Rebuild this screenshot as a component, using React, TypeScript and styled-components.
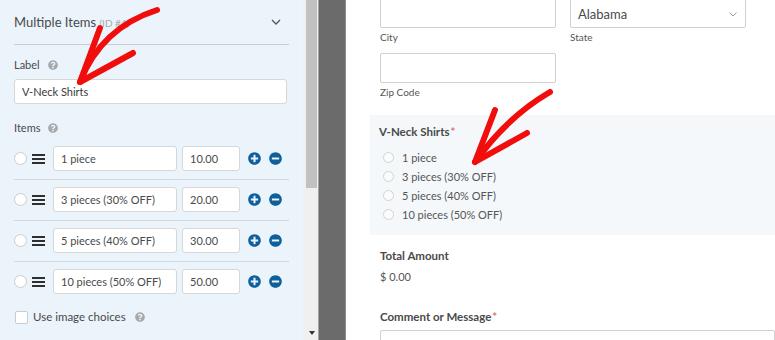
import React from "react";
import styled, { createGlobalStyle } from "styled-components";
import { FaPlusCircle, FaMinusCircle, FaQuestionCircle } from "react-icons/fa";

const GlobalStyle = createGlobalStyle`
  html, body {
    margin: 0;
    padding: 0;
    background: #ffffff;
  }
  * {
    box-sizing: border-box;
  }
`;

const FONT = `Lato, "Noto Sans", sans-serif`;

const items = [
  { label: "1 piece", price: "10.00" },
  { label: "3 pieces (30% OFF)", price: "20.00" },
  { label: "5 pieces (40% OFF)", price: "30.00" },
  { label: "10 pieces (50% OFF)", price: "50.00" },
];

const Help: React.FC = () => (
  <HelpIcon>
    <FaQuestionCircle />
  </HelpIcon>
);

const App: React.FC = () => {
  return (
    <>
      <GlobalStyle />
      <Page>
        <Options>
          <Header>
            <HeaderTitle>
              Multiple Items <small>(ID #4)</small>
            </HeaderTitle>
            <svg width="10" height="7" viewBox="0 0 10 7">
              <polyline points="1,1 5,5 9,1" fill="none" stroke="#555" strokeWidth="1.3" />
            </svg>
          </Header>

          <OptLabel style={{ marginTop: 12 }}>
            Label <Help />
          </OptLabel>
          <TextBox>V-Neck Shirts</TextBox>

          <OptLabel style={{ marginTop: 16 }}>
            Items <Help />
          </OptLabel>
          <ItemList>
            {items.map((it) => (
              <ItemRow key={it.label}>
                <Dot />
                <Handle>
                  <span />
                  <span />
                  <span />
                </Handle>
                <ItemInput $w={124}>{it.label}</ItemInput>
                <ItemInput $w={58}>{it.price}</ItemInput>
                <RoundBtn>
                  <FaPlusCircle />
                </RoundBtn>
                <RoundBtn>
                  <FaMinusCircle />
                </RoundBtn>
              </ItemRow>
            ))}
          </ItemList>

          <CheckRow>
            <Check />
            Use image choices <Help />
          </CheckRow>
        </Options>

        <ScrollTrack>
          <Thumb />
          <DownArrow />
        </ScrollTrack>

        <Divider />

        <Preview>
          <Fields>
            <FieldRow>
              <Field>
                <Input />
                <SubLabel>City</SubLabel>
              </Field>
              <Field>
                <Select>
                  Alabama
                  <svg width="8" height="5" viewBox="0 0 8 5">
                    <polyline points="0.5,0.5 4,4 7.5,0.5" fill="none" stroke="#999" strokeWidth="1" />
                  </svg>
                </Select>
                <SubLabel>State</SubLabel>
              </Field>
            </FieldRow>
            <Field style={{ marginTop: 9 }}>
              <Input />
              <SubLabel>Zip Code</SubLabel>
            </Field>
          </Fields>

          <ChoiceBox>
            <FieldTitle>
              V-Neck Shirts<Req>*</Req>
            </FieldTitle>
            <ChoiceList>
              {items.map((it) => (
                <Choice key={it.label}>
                  <ChoiceDot />
                  {it.label}
                </Choice>
              ))}
            </ChoiceList>
          </ChoiceBox>

          <Fields>
            <FieldTitle style={{ marginTop: 13 }}>Total Amount</FieldTitle>
            <Amount>$ 0.00</Amount>
            <FieldTitle style={{ marginTop: 24 }}>
              Comment or Message<Req>*</Req>
            </FieldTitle>
            <TextArea />
          </Fields>
        </Preview>

        <Arrows width="775" height="340" viewBox="0 0 775 340">
          <g fill="none" stroke="#f20d0d" strokeWidth="6" strokeLinecap="round" strokeLinejoin="round">
            <path d="M157 10 Q101 28 80 82" />
            <path d="M100 28 L80 82 L133 53" />
            <path d="M550 92 Q507 117 475 162" />
            <path d="M495 110 L475 162 L527 133" />
          </g>
        </Arrows>
      </Page>
    </>
  );
};

export default App;

const Page = styled.div`
  position: relative;
  display: flex;
  width: 775px;
  height: 340px;
  overflow: hidden;
  font-family: ${FONT};
  color: #444;
`;

const Options = styled.div`
  width: 303px;
  flex-shrink: 0;
  background: #ebf3fb;
  padding: 0 14px;
`;

const Header = styled.div`
  height: 45px;
  display: flex;
  align-items: center;
  justify-content: space-between;
  padding-right: 8px;
  border-bottom: 1px solid #c6ccd3;
`;

const HeaderTitle = styled.div`
  font-size: 13px;
  color: #4a4a4a;
  small {
    font-size: 10px;
    color: #aaa;
  }
`;

const OptLabel = styled.div`
  display: flex;
  align-items: center;
  gap: 8px;
  font-size: 11px;
  line-height: 16px;
  color: #4a4a4a;
`;

const HelpIcon = styled.span`
  display: inline-flex;
  color: #a7a9ab;
  font-size: 10px;
`;

const TextBox = styled.div`
  margin-top: 6px;
  height: 25px;
  width: 273px;
  background: #fff;
  border: 1px solid #d7d7d7;
  border-radius: 3px;
  padding: 0 7px;
  display: flex;
  align-items: center;
  font-size: 11px;
  color: #3a3a3a;
`;

const ItemList = styled.div`
  margin-top: 3px;
`;

const ItemRow = styled.div`
  display: flex;
  align-items: center;
  padding: 7px 0 8px;
  border-bottom: 1px solid #d2d8de;
  &:last-child {
    border-bottom: none;
  }
`;

const Dot = styled.span`
  width: 13px;
  height: 13px;
  border-radius: 50%;
  background: #fff;
  border: 1px solid #ccc;
  margin-right: 5px;
  flex-shrink: 0;
`;

const Handle = styled.span`
  width: 13px;
  display: flex;
  flex-direction: column;
  gap: 2px;
  margin-right: 8px;
  span {
    height: 2px;
    background: #2f2f2f;
  }
`;

const ItemInput = styled.div<{ $w: number }>`
  width: ${(p) => p.$w}px;
  height: 25px;
  background: #fff;
  border: 1px solid #d7d7d7;
  border-radius: 3px;
  padding: 0 7px;
  margin-right: 5px;
  display: flex;
  align-items: center;
  font-size: 11px;
  color: #4a4a4a;
  white-space: nowrap;
`;

const RoundBtn = styled.span`
  display: inline-flex;
  color: #0e5f9c;
  font-size: 13px;
  margin-left: 3px;
  & + & {
    margin-left: 8px;
  }
`;

const CheckRow = styled.div`
  margin-top: 7px;
  display: flex;
  align-items: center;
  font-size: 11.5px;
  line-height: 16px;
  color: #4a4a4a;
  ${HelpIcon} {
    margin-left: 9px;
  }
`;

const Check = styled.span`
  width: 13px;
  height: 13px;
  background: #fff;
  border: 1px solid #ccc;
  border-radius: 2px;
  margin: 0 5px 0 1px;
`;

const ScrollTrack = styled.div`
  width: 15px;
  flex-shrink: 0;
  background: #f0f0f0;
  display: flex;
  flex-direction: column;
  align-items: flex-end;
  justify-content: space-between;
  padding: 0 1px 5px 3px;
`;

const Thumb = styled.div`
  width: 11px;
  height: 188px;
  background: #c1c1c1;
`;

const DownArrow = styled.div`
  width: 0;
  height: 0;
  margin-right: 2px;
  border-left: 3.5px solid transparent;
  border-right: 3.5px solid transparent;
  border-top: 4px solid #333;
`;

const Divider = styled.div`
  width: 28px;
  flex-shrink: 0;
  background: #6b6b6b;
  border-left: 1px solid #a3a3a3;
  border-right: 1px solid #8e8e8e;
`;

const Preview = styled.div`
  flex: 1;
  background: #fff;
  padding-left: 24px;
`;

const Fields = styled.div`
  padding-left: 10px;
  &:first-child {
    margin-top: -2px;
  }
`;

const FieldRow = styled.div`
  display: flex;
  gap: 14px;
`;

const Field = styled.div`
  width: 176px;
`;

const Input = styled.div`
  height: 30px;
  border: 1px solid #d0d0d0;
  border-radius: 2px;
  background: #fff;
`;

const Select = styled(Input)`
  display: flex;
  align-items: center;
  justify-content: space-between;
  padding: 2px 8px 0 7px;
  font-size: 13px;
  color: #4a4a4a;
`;

const SubLabel = styled.div`
  margin-top: 3px;
  font-size: 10px;
  line-height: 13px;
  color: #555;
`;

const ChoiceBox = styled.div`
  margin-top: 16px;
  background: #f4f8fb;
  padding: 9px 9px 11px;
`;

const FieldTitle = styled.div`
  font-size: 11.5px;
  line-height: 16px;
  font-weight: 700;
  color: #4a4a4a;
`;

const Req = styled.span`
  color: #e27272;
  margin-left: 1px;
`;

const ChoiceList = styled.div`
  margin-top: 8px;
`;

const Choice = styled.div`
  display: flex;
  align-items: center;
  height: 19px;
  padding-left: 4px;
  font-size: 11px;
  color: #555;
`;

const ChoiceDot = styled.span`
  width: 11px;
  height: 11px;
  border-radius: 50%;
  border: 1px solid #d3d3d3;
  background: #fbfcfd;
  margin-right: 8px;
`;

const Amount = styled.div`
  margin-top: 5px;
  font-size: 11px;
  line-height: 16px;
  color: #555;
`;

const TextArea = styled.div`
  margin-top: 5px;
  height: 40px;
  border: 1px solid #d0d0d0;
  border-radius: 2px;
`;

const Arrows = styled.svg`
  position: absolute;
  left: 0;
  top: 0;
  pointer-events: none;
`;
